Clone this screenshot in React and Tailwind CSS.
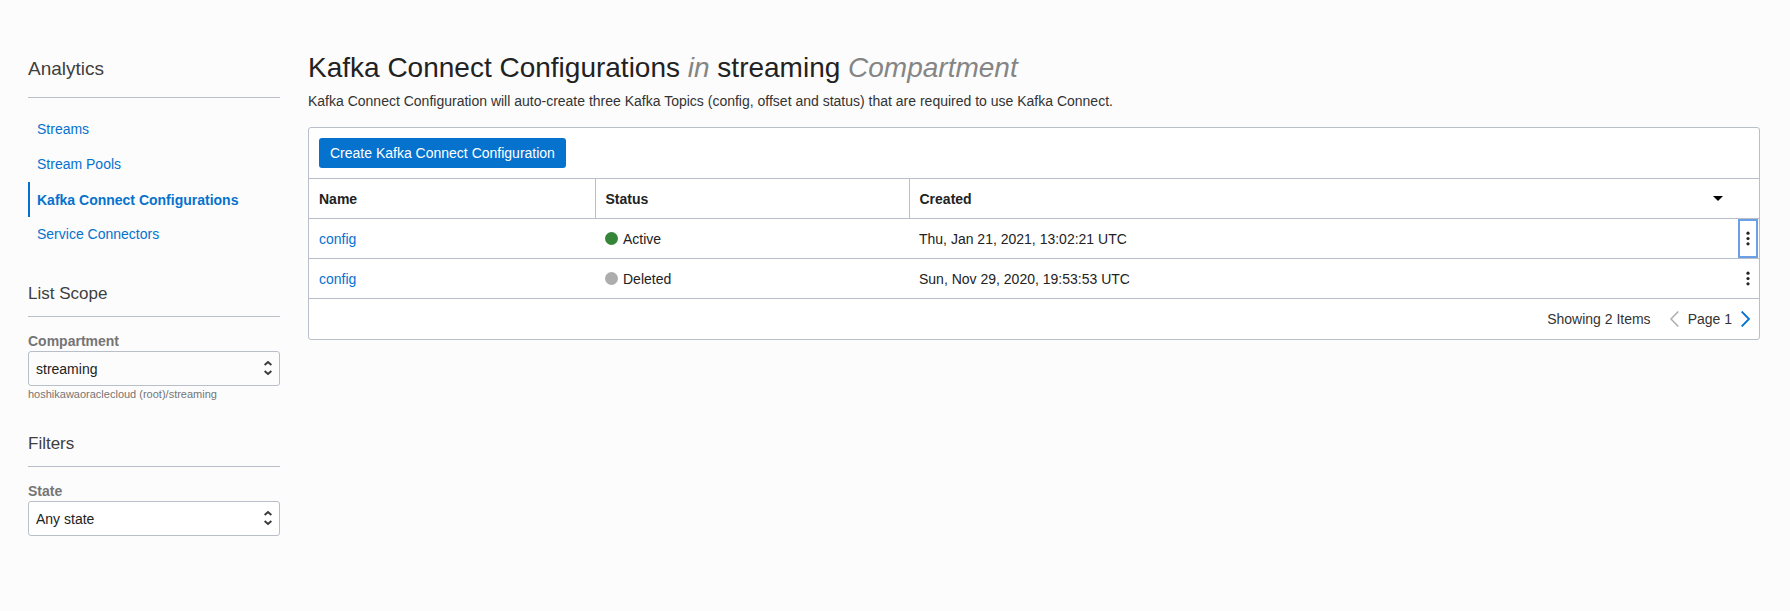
const navItems = [
  { label: "Streams" },
  { label: "Stream Pools" },
  { label: "Kafka Connect Configurations", active: true },
  { label: "Service Connectors" },
];

const rows = [
  { id: 1, name: "config", status: "Active", dot: "bg-[#358538]", created: "Thu, Jan 21, 2021, 13:02:21 UTC", focused: true },
  { id: 2, name: "config", status: "Deleted", dot: "bg-[#adadad]", created: "Sun, Nov 29, 2020, 19:53:53 UTC" },
];

function SectionTitle({ children, className }) {
  return (
    <h2 className={`border-b border-[#b9bfc8] font-light text-[#3f3f3f] ${className}`}>{children}</h2>
  );
}

function SelectField({ id, label, value, hint, className }) {
  return (
    <div className="flex flex-col">
      <label htmlFor={id} className="h-5 text-sm leading-5 font-bold text-[#757575]">
        {label}
      </label>
      <div className="relative">
        <select
          id={id}
          defaultValue={value}
          className={`block h-[35px] w-full appearance-none rounded-[3px] border border-[#b9bfc8] pr-8 pl-[7px] text-sm text-[#222] ${className}`}
        >
          <option>{value}</option>
        </select>
        <svg
          className="pointer-events-none absolute top-[9px] right-2 h-4 w-2"
          viewBox="0 0 8 16"
          fill="none"
          stroke="#3a3a3a"
          strokeWidth="2"
          aria-hidden="true"
        >
          <path d="M0.6 5 L4 2 L7.4 5 M0.6 11 L4 14 L7.4 11" />
        </svg>
      </div>
      {hint && <p className="text-[11px] leading-4 text-[#757575]">{hint}</p>}
    </div>
  );
}

function Sidebar() {
  return (
    <aside className="flex w-[252px] shrink-0 flex-col">
      <SectionTitle className="pt-2 pb-[14px] text-[19px] leading-7">Analytics</SectionTitle>
      <nav className="mt-[14px] flex flex-col">
        {navItems.map((item) => (
          <a
            key={item.label}
            href="#"
            className={`flex h-[35px] items-center border-l-2 pl-[7px] text-sm text-[#0572ce] ${
              item.active ? "border-[#0572ce] font-bold" : "border-transparent pb-0.5"
            }`}
          >
            {item.label}
          </a>
        ))}
      </nav>
      <SectionTitle className="mt-[30px] pb-[10px] text-[17px] leading-6">List Scope</SectionTitle>
      <div className="mt-[14px]">
        <SelectField
          id="compartment"
          label="Compartment"
          value="streaming"
          hint="hoshikawaoraclecloud (root)/streaming"
          className="bg-[#fcfcfc]"
        />
      </div>
      <SectionTitle className="mt-[30px] pb-[10px] text-[17px] leading-6">Filters</SectionTitle>
      <div className="mt-[14px]">
        <SelectField id="state" label="State" value="Any state" className="bg-white" />
      </div>
    </aside>
  );
}

function KebabIcon() {
  return (
    <svg className="h-4 w-1" viewBox="0 0 4 16" fill="#222" aria-hidden="true">
      <circle cx="2" cy="2.2" r="1.6" />
      <circle cx="2" cy="7.5" r="1.6" />
      <circle cx="2" cy="12.8" r="1.6" />
    </svg>
  );
}

function ConfigTable() {
  return (
    <table className="w-full table-fixed border-collapse text-left text-sm text-[#222]">
      <colgroup>
        <col className="w-[286px]" />
        <col className="w-[314px]" />
        <col />
        <col className="w-[60px]" />
      </colgroup>
      <thead>
        <tr className="h-10 border-y border-[#b9bfc8]">
          <th scope="col" className="border-r border-[#b9bfc8] px-[10px]">Name</th>
          <th scope="col" className="border-r border-[#b9bfc8] px-[10px]">Status</th>
          <th scope="col" className="px-[10px]">Created</th>
          <th scope="col" className="pl-[14px]">
            <button type="button" aria-label="Sort by created" className="flex">
              <svg className="h-[5px] w-[10px]" viewBox="0 0 10 5" aria-hidden="true">
                <path d="M0 0H10L5 5Z" fill="#000" />
              </svg>
            </button>
          </th>
        </tr>
      </thead>
      <tbody>
        {rows.map((row) => (
          <tr key={row.id} className="h-10 border-b border-[#b9bfc8]">
            <td className="px-[10px]">
              <a href="#" className="text-[#0572ce]">{row.name}</a>
            </td>
            <td className="px-[10px]">
              <span className="flex items-center gap-[5px]">
                <span className={`size-[13px] rounded-full ${row.dot}`} />
                {row.status}
              </span>
            </td>
            <td className="px-[10px]">{row.created}</td>
            <td className="pr-px">
              <button
                type="button"
                aria-label="Row actions"
                className={`ml-auto flex h-[39px] w-5 items-center justify-center border-2 ${
                  row.focused ? "border-[#6ba0e6]" : "border-transparent"
                }`}
              >
                <KebabIcon />
              </button>
            </td>
          </tr>
        ))}
      </tbody>
    </table>
  );
}

function Pagination() {
  return (
    <div className="flex h-10 items-center justify-end pr-[9px] text-sm text-[#333]">
      <span className="mr-[19px]">Showing 2 Items</span>
      <button type="button" aria-label="Previous page" className="mr-[9px] flex" disabled>
        <svg className="h-4 w-[9px]" viewBox="0 0 9 16" fill="none" stroke="#adadad" strokeWidth="1.5" aria-hidden="true">
          <path d="M8.3 0.5 L1 8 L8.3 15.5" />
        </svg>
      </button>
      <span className="mr-[9px]">Page 1</span>
      <button type="button" aria-label="Next page" className="flex">
        <svg className="h-4 w-[9px]" viewBox="0 0 9 16" fill="none" stroke="#0572ce" strokeWidth="1.8" aria-hidden="true">
          <path d="M0.7 0.5 L8 8 L0.7 15.5" />
        </svg>
      </button>
    </div>
  );
}

export default function App() {
  return (
    <div className="flex min-h-screen gap-7 bg-[#fcfcfc] pt-[47px] pr-[30px] pb-10 pl-7 font-['Liberation_Sans',Arial,sans-serif]">
      <Sidebar />
      <main className="min-w-0 flex-1">
        <h1 className="text-[28px] leading-[42px] text-[#222]">
          Kafka Connect Configurations <em className="text-[#858585]">in</em> streaming{" "}
          <em className="text-[#858585]">Compartment</em>
        </h1>
        <p className="mt-0.5 text-sm leading-5 text-[#333]">
          Kafka Connect Configuration will auto-create three Kafka Topics (config, offset and status) that are required
          to use Kafka Connect.
        </p>
        <section className="mt-4 rounded-[3px] border border-[#b9bfc8] bg-white">
          <div className="p-[10px]">
            <button type="button" className="block h-[30px] rounded-[3px] bg-[#0572ce] px-[11px] text-sm text-white">
              Create Kafka Connect Configuration
            </button>
          </div>
          <ConfigTable />
          <Pagination />
        </section>
      </main>
    </div>
  );
}
